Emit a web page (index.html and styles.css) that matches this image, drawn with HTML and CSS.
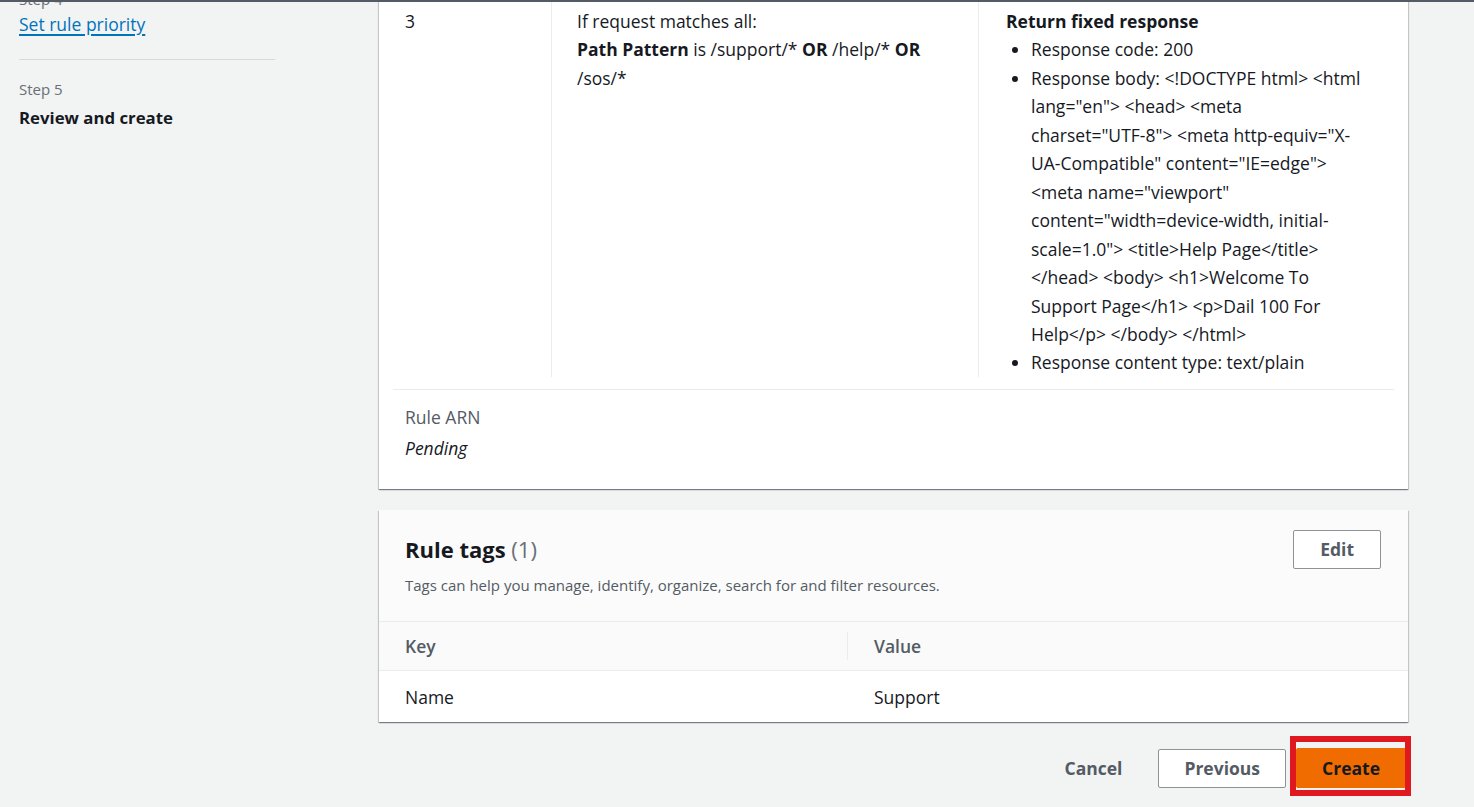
FILE: index.html
```html
<!DOCTYPE html>
<html lang="en">
<head>
<meta charset="UTF-8">
<title>Review and create</title>
<link rel="stylesheet" href="styles.css">
</head>
<body>
<div class="topline"></div>
<div class="layout">
  <nav class="side">
    <div class="side-inner">
      <div class="step-label">Step 4</div>
      <a class="step-link" href="#">Set rule priority</a>
      <hr class="side-div">
      <div class="step-label">Step 5</div>
      <div class="step-current">Review and create</div>
    </div>
  </nav>
  <main class="main">
    <section class="card card-rule">
      <div class="rule-table">
        <div class="cell c1">3</div>
        <div class="cell c2">
          <div>If request matches all:</div>
          <div><b>Path Pattern</b> is /support/* <b>OR</b> /help/* <b>OR</b> /sos/*</div>
        </div>
        <div class="cell c3">
          <div class="action-title">Return fixed response</div>
          <ul class="action-list">
            <li>Response code: 200</li>
            <li>Response body: &lt;!DOCTYPE html&gt; &lt;html<br>lang="en"&gt; &lt;head&gt; &lt;meta<br>charset="UTF-8"&gt; &lt;meta http-equiv="X-<br>UA-Compatible" content="IE=edge"&gt;<br>&lt;meta name="viewport"<br>content="width=device-width, initial-<br>scale=1.0"&gt; &lt;title&gt;Help Page&lt;/title&gt;<br>&lt;/head&gt; &lt;body&gt; &lt;h1&gt;Welcome To<br>Support Page&lt;/h1&gt; &lt;p&gt;Dail 100 For<br>Help&lt;/p&gt; &lt;/body&gt; &lt;/html&gt;</li>
            <li>Response content type: text/plain</li>
          </ul>
        </div>
      </div>
      <div class="arn">
        <div class="arn-label">Rule ARN</div>
        <div class="arn-value">Pending</div>
      </div>
    </section>

    <section class="card card-tags">
      <div class="tags-head">
        <div class="tags-titles">
          <h2 class="tags-title">Rule tags <span class="count">(1)</span></h2>
          <p class="tags-desc">Tags can help you manage, identify, organize, search for and filter resources.</p>
        </div>
        <button class="btn btn-edit">Edit</button>
      </div>
      <table class="tags-table">
        <thead>
          <tr><th class="col-key">Key</th><th class="col-val">Value</th></tr>
        </thead>
        <tbody>
          <tr><td>Name</td><td class="td-val">Support</td></tr>
        </tbody>
      </table>
    </section>

    <div class="actions">
      <button class="btn-link">Cancel</button>
      <button class="btn">Previous</button>
      <button class="btn btn-primary highlighted">Create</button>
    </div>
  </main>
</div>
</body>
</html>
```

FILE: styles.css
```css
* { box-sizing: border-box; }
html, body { margin: 0; padding: 0; }
body {
  background: #f2f3f3;
  font-family: "Open Sans", "Noto Sans", sans-serif;
  color: #16191f;
  font-size: 17.5px;
  overflow: hidden;
  height: 807px;
}
.topline {
  position: fixed;
  top: 0; left: 0; right: 0;
  height: 2px;
  background: #545b64;
  z-index: 5;
}
.layout {
  display: grid;
  grid-template-columns: 379px 1029px;
}

/* sidebar */
.side { padding-left: 19px; }
.side-inner { margin-top: -12px; width: 256px; }
.step-label {
  font-size: 15px;
  line-height: 22px;
  color: #687078;
}
.step-link {
  display: block;
  margin-top: 2px;
  font-size: 17.5px;
  line-height: 24px;
  color: #0073bb;
  text-decoration: underline;
  text-decoration-thickness: 1.5px;
  text-underline-offset: 3px;
}
.side-div {
  border: 0;
  border-top: 1px solid #d5dbdb;
  margin: 23px 0 18px;
}
.step-current {
  margin-top: 6px;
  font-size: 16.8px;
  line-height: 24px;
  font-weight: 700;
}

/* cards */
.card {
  background: #fff;
  box-shadow: 0 1px 1px 0 rgba(0,28,36,.35), 1px 1px 1px 0 rgba(0,28,36,.15), -1px 1px 1px 0 rgba(0,28,36,.15);
}
.card-rule { margin-top: -10px; }
.rule-table {
  display: grid;
  grid-template-columns: 158px 427px 1fr;
  margin: 0 14px;
  padding-bottom: 12px;
  border-bottom: 1px solid #eaeded;
  line-height: 28.45px;
}
.cell { padding-top: 17px; }
.c1 { padding-left: 12px; }
.c2 { padding-left: 25px; padding-right: 22px; border-left: 1px solid #eaeded; }
.c3 { padding-left: 27px; padding-right: 4px; border-left: 1px solid #eaeded; white-space: nowrap; }
.action-title { font-weight: 700; }
.action-list {
  margin: 0;
  padding-left: 25px;
}
.arn { padding: 15px 26px 29px; }
.arn-label {
  line-height: 24px;
  color: #545b64;
}
.arn-value {
  margin-top: 7px;
  line-height: 24px;
  font-style: italic;
}

.card-tags { margin-top: 21px; }
.tags-head {
  display: flex;
  justify-content: space-between;
  align-items: flex-start;
  padding: 20px 27px 25px 26px;
  background: #fbfbfb;
}
.tags-title {
  margin: 0;
  font-size: 22px;
  line-height: 39px;
  font-weight: 700;
}
.count { font-weight: 400; color: #687078; }
.tags-desc {
  margin: 5px 0 0;
  font-size: 15px;
  line-height: 22px;
  color: #545b64;
}
.tags-table {
  width: 100%;
  border-collapse: collapse;
}
.tags-table th {
  text-align: left;
  background: #fafafa;
  color: #545b64;
  font-weight: 600;
  height: 49px;
  padding: 0 26px;
  border-top: 1px solid #eaeded;
}
.col-key { width: 469px; position: relative; }
.col-key::after {
  content: "";
  position: absolute;
  right: 0; top: 10px; bottom: 10px;
  border-right: 1px solid #eaeded;
}
.tags-table td {
  height: 52px;
  padding: 1px 26px 0;
  border-top: 1px solid #eaeded;
}

/* actions */
.actions {
  display: flex;
  justify-content: flex-end;
  align-items: center;
  gap: 10px;
  margin-top: 26px;
  padding-right: 2px;
}
.btn {
  font-family: inherit;
  font-size: 17.5px;
  font-weight: 700;
  color: #545b64;
  background: #fff;
  border: 1px solid #8d9399;
  border-radius: 2px;
  height: 39px;
  padding: 0 25px;
  cursor: pointer;
}
.btn-edit { padding: 0 26px; }
.btn-link {
  font-family: inherit;
  font-size: 17.5px;
  font-weight: 700;
  color: #545b64;
  background: none;
  border: 0;
  height: 39px;
  padding: 0 26px 0 20px;
}
.btn-primary {
  background: #f06c00;
  border-color: #f06c00;
  color: #16191f;
  height: 40px;
  padding: 0 25px;
}
.highlighted { position: relative; }
.highlighted::after {
  content: "";
  position: absolute;
  top: -13px; bottom: -9px; left: -7px; right: -6px;
  border: 6px solid #e0181f;
  pointer-events: none;
}
```
